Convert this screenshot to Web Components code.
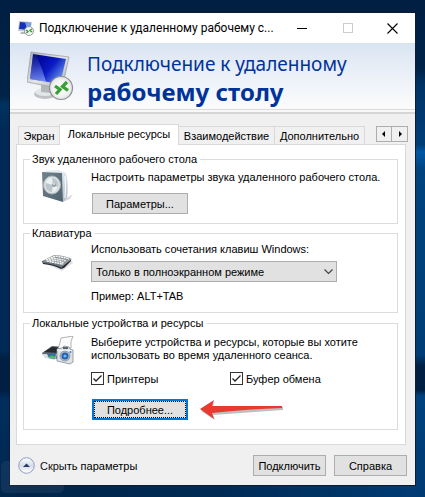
<!DOCTYPE html>
<html lang="ru">
<head>
<meta charset="utf-8">
<meta name="viewport" content="width=device-width, initial-scale=1">
<title>Подключение к удаленному рабочему столу</title>
<style>
    html{min-height: 100%; background: linear-gradient(180deg, #001f42 0px, #00234a 70px, #003366 85px, #003e78 145px, #0058a6 152px, #00437f 170px, #003d76 355px, #001f42 366px, #001f42 390px, #00427f 396px, #003c76 470px, #003a72 100%) right / 16px 100% no-repeat, linear-gradient(180deg, #001f42 0px, #002347 96px, #003260 104px, #002a55 130px, #002a55 350px, #001f42 360px, #001f42 390px, #002e5c 400px, #00264e 100%) left / 16px 100% no-repeat, linear-gradient(90deg, #002448 0%, #002a54 50%, #003c74 100%) bottom / 100% 50% no-repeat, #001f42;}
    body{margin: 0px; padding: 13px 10px 12px 10px; font-family: "Liberation Sans", Arial, sans-serif; font-size: 11px; line-height: 14px; color: #000000;}
    .gap{margin-top: 9px;}
    .checks{display: grid; grid-template-columns: 139px 1fr; margin-top: 10px;}
    .more{display: flex; align-items: center; gap: 12px; margin: 14px 0px 0px 1px;}
</style>
</head>
<body>

<rdp-window>
    <rdp-titlebar slot="title">Подключение к удаленному рабочему с...</rdp-titlebar>
    <rdp-banner slot="banner">
        <span slot="first">Подключение к удаленному</span>
        <span slot="second">рабочему столу</span>
    </rdp-banner>

    <rdp-tabs></rdp-tabs>

    <rdp-panel>
        <rdp-group label="Звук удаленного рабочего стола" style="--top: 4px">
            <rdp-icon name="speaker" slot="icon"></rdp-icon>
            <div>Настроить параметры звука удаленного рабочего стола.</div>
            <rdp-button style="margin: 9px 0px 0px 1px">Параметры...</rdp-button>
        </rdp-group>

        <rdp-group label="Клавиатура" style="--top: 2px; margin-top: 2px">
            <rdp-icon name="keyboard" slot="icon"></rdp-icon>
            <rdp-select label="Использовать сочетания клавиш Windows:" value="Только в полноэкранном режиме"></rdp-select>
            <div style="margin-top: 7px">Пример: ALT+TAB</div>
        </rdp-group>

        <rdp-group label="Локальные устройства и ресурсы" style="--top: 6px; margin-top: 3px">
            <rdp-icon name="printer" slot="icon"></rdp-icon>
            <div style="line-height: 13px">Выберите устройства и ресурсы, которые вы хотите использовать во время удаленного сеанса.</div>
            <div class="checks">
                <rdp-check>Принтеры</rdp-check>
                <rdp-check>Буфер обмена</rdp-check>
            </div>
            <div class="more">
                <rdp-button focused>Подробнее...</rdp-button>
                <rdp-icon name="arrow"></rdp-icon>
            </div>
        </rdp-group>
    </rdp-panel>

    <rdp-footer slot="footer"></rdp-footer>
</rdp-window>

<rdp-overlay></rdp-overlay>

<script>
// Shared helper: clone the markup into an open shadow root
function attach(el, html) {
    const shadowRoot = el.attachShadow({ mode: 'open' });
    const template = document.createElement('template');
    template.innerHTML = html;
    shadowRoot.appendChild(template.content.cloneNode(true));
    return shadowRoot;
}

const ICONS = {
    monitor: `
        <svg viewBox="0 0 48 50" width="48" height="50" aria-hidden="true">
            <defs>
                <linearGradient id="scr" x1="0" y1="0" x2="1" y2="0.7"><stop offset="0" stop-color="#0a1470"/><stop offset=".3" stop-color="#0208a0"/><stop offset=".6" stop-color="#0a1cc4"/><stop offset="1" stop-color="#6f9cf0"/></linearGradient>
                <linearGradient id="frm" x1="0" y1="0" x2="1" y2="1"><stop offset="0" stop-color="#a9adb0"/><stop offset=".5" stop-color="#e4e6e7"/><stop offset="1" stop-color="#a4a7aa"/></linearGradient>
                <linearGradient id="wdg" x1="0" y1="0" x2="0" y2="1"><stop offset="0" stop-color="#7d9ff0" stop-opacity="0"/><stop offset="1" stop-color="#a9c3ff" stop-opacity=".65"/></linearGradient>
                <radialGradient id="bdg" cx=".5" cy=".5" r=".5"><stop offset="0" stop-color="#ffffff"/><stop offset=".75" stop-color="#f0f0f0"/><stop offset="1" stop-color="#dedede"/></radialGradient>
            </defs>
            <ellipse cx="18" cy="43" rx="11" ry="5" fill="#bfc2c4"/>
            <ellipse cx="18" cy="41" rx="10" ry="4" fill="#e4e5e6"/>
            <path d="M14 34L25 36L24 42L14 41Z" fill="#b4b7ba"/>
            <path d="M4 1L42 6L35 38L0 31Z" fill="url(#frm)" stroke="#94999d" stroke-width=".7"/>
            <path d="M6 3L39 8L33 33L3 28Z" fill="url(#scr)"/>
            <path d="M6 3L9 4Q15 16 19 31L3 28Z" fill="url(#wdg)"/>
            <circle cx="34" cy="37" r="11.5" fill="url(#bdg)" stroke="#8d9092" stroke-width="1.2"/>
            <path d="M28 35L33 38.500L29 43M40 31L35.500 35.500L41 39.500" fill="none" stroke="#35a135" stroke-width="3.200"/>
        </svg>`,
    speaker: `
        <svg viewBox="0 0 32 32" width="32" height="32" aria-hidden="true">
            <defs><linearGradient id="sp" x1="0" y1="0" x2="1" y2="1"><stop offset="0" stop-color="#71838d"/><stop offset="1" stop-color="#4e626e"/></linearGradient>
            <linearGradient id="sd" x1="0" y1="0" x2="0" y2="1"><stop offset="0" stop-color="#e6edf2"/><stop offset="1" stop-color="#aebbc8"/></linearGradient></defs>
            <path d="M23 29L31 24L28 29L21 32Z" fill="#000" opacity=".15"/>
            <path d="M0 1L17 0L24 3Q27 14 25 28L21 32L20 4Z" fill="url(#sd)"/>
            <path d="M0 2L20 3L21 32L1 26Z" fill="url(#sp)"/>
            <ellipse cx="10" cy="15" rx="8.500" ry="9" fill="#dce2e6" stroke="#a5b0b7"/>
            <ellipse cx="10" cy="15" rx="6.500" ry="7" fill="#bcc6cb"/>
            <path d="M11 15L4 13Q5 8 10 8ZM11 15L16 17Q14 22 10 22Z" fill="#eef1f3"/>
            <circle cx="12" cy="15" r="2" fill="#8e9ca5"/>
            <circle cx="12" cy="14" r="1" fill="#e6ebee"/>
            <path d="M23 6Q24 16 23 28" stroke="#ffffff" fill="none"/>
        </svg>`,
    keyboard: `
        <svg viewBox="0 0 32 32" width="32" height="32" aria-hidden="true">
            <path d="M4 22L20 29L31 21L30 19Z" fill="#000" opacity=".12"/>
            <path d="M0 19L1 22Q12 23 19 27L22 26L29 19L29 17L20 23Z" fill="#252b33"/>
            <path d="M1 21Q12 22 20 26L21 23L1 19Z" fill="#69717b"/>
            <path d="M0 19L12 13Q21 13 30 17L21 24Q11 20 0 19Z" fill="#8f959b"/>
            <path d="M4 18L13 14Q21 15 27 17M5 19L15 21L21 22M9 16Q19 17 24 19M7 18Q16 18 22 21" fill="none" stroke="#f5f5f5" stroke-width="1.4" stroke-dasharray="2 .6"/>
        </svg>`,
    printer: `
        <svg viewBox="0 0 32 32" width="32" height="32" aria-hidden="true">
            <path d="M0 17L10 10L24 11L19 21L14 23L1 19Z" fill="#5d666d"/>
            <path d="M2 16L10 11L23 12L17 17Z" fill="#262b30"/>
            <path d="M0 18L15 18L13 24L3 22Z" fill="#d8dde0"/>
            <path d="M5 18L14 18L13 23L7 22Z" fill="#2876a8"/>
            <path d="M7 21Q10 18 13 21L13 23L7 22Z" fill="#5eb567"/>
            <path d="M19 2L31 0Q28 5 29 12L16 13Q18 7 19 2Z" fill="#fbfbfb" stroke="#9ba1a7" stroke-width=".8"/>
            <path d="M15 13L20 12L22 10L27 11L28 13L31 14V26L28 28L15 25Z" fill="#dfe3e6" stroke="#858d94" stroke-width=".8"/>
            <path d="M15 14L30 15" stroke="#ffffff"/>
            <rect x="21" y="11" width="5" height="2" fill="#59656f"/>
            <circle cx="23" cy="20" r="5" fill="#b4bec7" stroke="#7a858f" stroke-width=".7"/>
            <circle cx="23" cy="20" r="3.500" fill="#255fb4"/>
            <circle cx="23" cy="20" r="1.600" fill="#69bdf3"/>
            <circle cx="28.500" cy="16" r="1" fill="#3a7acb"/>
        </svg>`,
    arrow: `
        <svg viewBox="0 0 84 20" width="84" height="20" aria-hidden="true">
            <path d="M1 11L14 3L13 7L83 7V10L13 15L15 20Z" fill="#000" opacity=".25"/>
            <path d="M0 9L14 0L12 6Q45 6 82 6V8Q48 9 12 13L14 19Z" fill="#e53b30"/>
        </svg>`
};

class RdpIcon extends HTMLElement {
    constructor() {
        super();
        attach(this, `
            <style>
                :host{display: block;}
                svg{display: block;}
            </style>
            ${ICONS[this.getAttribute('name')]}
        `);
    }
}
customElements.define('rdp-icon', RdpIcon);

class RdpWindow extends HTMLElement {
    constructor() {
        super();
        attach(this, `
            <style>
                :host{display: block; background-color: #f0f0f0; box-shadow: 0px 0px 0px 1px #0b1c33;}
                main{padding: 10px 9px 0px 6px;}
                footer{padding: 10px 8px 9px 8px;}
            </style>
            <slot name="title"></slot>
            <slot name="banner"></slot>
            <main><slot></slot></main>
            <footer><slot name="footer"></slot></footer>
        `);
    }
}
customElements.define('rdp-window', RdpWindow);

class RdpTitlebar extends HTMLElement {
    constructor() {
        super();
        attach(this, `
            <style>
                :host{display: flex; align-items: center; height: 30px; padding-left: 8px; background-color: #ffffff; font-family: Roboto, "Noto Sans", sans-serif; font-size: 12px;}
                .logo{width: 16px; height: 16px; margin-right: 5px; flex: none;}
                .logo svg{display: block; width: 16px; height: 16px;}
                .text{flex: 1; min-width: 0px; white-space: nowrap; overflow: hidden;}
                button{width: 45px; height: 30px; flex: none; padding: 0px; border: none; background: none; display: flex; align-items: center; justify-content: center;}
            </style>
            <div class="logo">
                <svg viewBox="0 0 16 16" aria-hidden="true">
                    <path d="M3 12L8 12L9 14L2 14Z" fill="#b6babd"/>
                    <path d="M1 1L14 2L12 12L0 11Z" fill="#c6cacc"/>
                    <path d="M2 2L13 3L11 10L1 9Z" fill="#1430bd"/>
                    <path d="M7 2L13 3L11 10L9 9Z" fill="#7aa0ec"/>
                    <circle cx="11" cy="11" r="4.500" fill="#f4f4f4" stroke="#83888b" stroke-width=".8"/>
                    <path d="M8 10L10 11.500L8.500 13M14 9L12 10.500L14 12" fill="none" stroke="#2f9b35" stroke-width="1.400"/>
                </svg>
            </div>
            <div class="text"><slot></slot></div>
            <button aria-label="Свернуть"><svg width="11" height="11"><path d="M0 5.500H10" stroke="#000"/></svg></button>
            <button aria-label="Развернуть" disabled><svg width="10" height="10"><rect x=".5" y=".5" width="9" height="9" fill="none" stroke="#cccccc"/></svg></button>
            <button aria-label="Закрыть"><svg width="11" height="11"><path d="M.5 .5L10.500 10.500M10.500 .5L.5 10.500" stroke="#000" stroke-width="1.100"/></svg></button>
        `);
    }
}
customElements.define('rdp-titlebar', RdpTitlebar);

class RdpBanner extends HTMLElement {
    constructor() {
        super();
        attach(this, `
            <style>
                :host{display: flex; align-items: flex-start; box-sizing: border-box; height: 71px; padding: 8px 0px 0px 17px; border-bottom: 2px solid #d5d5d5; background: linear-gradient(180deg, #d9e4f2 0px, #e9eff7 28px, #f8f9fb 58px, #fbfbfb 66px, #dcdcdc 66px, #dcdcdc 67px, #f8f8f8 67px); font-family: "Noto Sans", "Open Sans", sans-serif; color: #003399;}
                svg{display: block; flex: none;}
                h1{margin: 0px 0px 0px 12px; font-weight: 400; font-size: 19px; line-height: 27px; white-space: nowrap;}
                .second{display: block; font-weight: 700; font-size: 24px;}
            </style>
            ${ICONS.monitor}
            <h1><slot name="first"></slot><span class="second"><slot name="second"></slot></span></h1>
        `);
    }
}
customElements.define('rdp-banner', RdpBanner);

class RdpTabs extends HTMLElement {
    constructor() {
        super();
        attach(this, `
            <style>
                :host{display: flex; align-items: flex-end; padding-left: 2px;}
                button{box-sizing: border-box; height: 18px; padding: 0px; border: 1px solid #d9d9d9; border-left-width: 0px; border-bottom: none; background-color: #f0f0f0; font: inherit; color: inherit; white-space: nowrap;}
                .tab{flex: none;}
                .tab.first{width: 41px; border-left-width: 1px; border-right-width: 0px;}
                .tab.on{width: 120px; height: 21px; margin-bottom: -1px; padding-bottom: 2px; border-left-width: 1px; background-color: #ffffff; z-index: 1;}
                .tab.wide{width: 96px;}
                .tab.last{width: 90px;}
                .scroll{display: flex; margin: 0px -2px 2px auto;}
                .scroll button{display: flex; align-items: center; justify-content: center; width: 16px; height: 16px; border: 1px solid #adadad; background-color: #f0f0f0;}
                .scroll button + button{border-left-width: 0px;}
            </style>
            <button class="tab first">Экран</button>
            <button class="tab on">Локальные ресурсы</button>
            <button class="tab wide">Взаимодействие</button>
            <button class="tab last">Дополнительно</button>
            <div class="scroll">
                <button aria-label="Назад"><svg width="6" height="6"><path d="M1 3L4 0V6Z"/></svg></button>
                <button aria-label="Вперед"><svg width="6" height="6"><path d="M5 3L2 0V6Z"/></svg></button>
            </div>
        `);
    }
}
customElements.define('rdp-tabs', RdpTabs);

class RdpPanel extends HTMLElement {
    constructor() {
        super();
        attach(this, `
            <style>
                :host{display: block; padding: 7px 7px 14px 6px; border: 1px solid #d9d9d9; background-color: #ffffff;}
            </style>
            <slot></slot>
        `);
    }
}
customElements.define('rdp-panel', RdpPanel);

class RdpGroup extends HTMLElement {
    constructor() {
        super();
        attach(this, `
            <style>
                :host{display: block;}
                fieldset{margin: 0px; padding: 0px 8px 9px 18px; border: 1px solid #dcdcdc; min-width: 0px;}
                legend{margin-left: -12px; padding: 0px 3px 0px 2px;}
                .row{display: grid; grid-template-columns: 32px minmax(0, 1fr); column-gap: 17px; padding-top: var(--top, 4px);}
            </style>
            <fieldset>
                <legend>${this.getAttribute('label')}</legend>
                <div class="row">
                    <slot name="icon"></slot>
                    <div><slot></slot></div>
                </div>
            </fieldset>
        `);
    }
}
customElements.define('rdp-group', RdpGroup);

class RdpButton extends HTMLElement {
    constructor() {
        super();
        attach(this, `
            <style>
                :host{display: block; width: 96px; flex: none;}
                button{display: block; box-sizing: border-box; width: 100%; height: 21px; padding: 0px; border: 1px solid #adadad; background-color: #e1e1e1; font: inherit; color: inherit; white-space: nowrap;}
                :host([focused]) button{border: 2px solid #0078d7; outline: 1px dotted #000000; outline-offset: -3px;}
            </style>
            <button><slot></slot></button>
        `);
    }
}
customElements.define('rdp-button', RdpButton);

class RdpSelect extends HTMLElement {
    constructor() {
        super();
        attach(this, `
            <style>
                :host{display: block;}
                label{display: block;}
                .box{display: grid; align-items: center; width: 246px; max-width: 100%; margin-top: 5px;}
                select, svg{grid-area: 1 / 1;}
                select{appearance: none; box-sizing: border-box; width: 100%; height: 21px; margin: 0px; padding: 0px 20px 0px 4px; border: 1px solid #adadad; border-radius: 0px; background-color: #e1e1e1; font: inherit; color: inherit;}
                svg{justify-self: end; margin-right: 4px; pointer-events: none;}
            </style>
            <label for="keys">${this.getAttribute('label')}</label>
            <div class="box">
                <select id="keys"><option>${this.getAttribute('value')}</option></select>
                <svg width="9" height="6"><path d="M.5 .5L4.500 4.500L8.500 .5" fill="none" stroke="#444444" stroke-width="1.200"/></svg>
            </div>
        `);
    }
}
customElements.define('rdp-select', RdpSelect);

class RdpCheck extends HTMLElement {
    constructor() {
        super();
        attach(this, `
            <style>
                :host{display: block;}
                label{display: flex; align-items: center; gap: 3px; height: 13px;}
                .box{display: grid; width: 13px; height: 13px;}
                input, svg{grid-area: 1 / 1;}
                input{appearance: none; box-sizing: border-box; width: 13px; height: 13px; margin: 0px; border: 1px solid #333333; background-color: #ffffff;}
                svg{pointer-events: none; visibility: hidden;}
                input:checked + svg{visibility: visible;}
            </style>
            <label>
                <span class="box"><input type="checkbox" checked><svg width="13" height="13"><path d="M2.500 6.500L5 9L10.500 3.500" fill="none" stroke="#222222" stroke-width="1.300"/></svg></span>
                <slot></slot>
            </label>
        `);
    }
}
customElements.define('rdp-check', RdpCheck);

class RdpFooter extends HTMLElement {
    constructor() {
        super();
        attach(this, `
            <style>
                :host{display: flex; align-items: center; gap: 8px;}
                .toggle{display: flex; align-items: center; gap: 5px; margin-right: auto; padding: 0px; border: none; background: none; font: inherit; color: inherit;}
                rdp-button{width: 73px;}
            </style>
            <button class="toggle">
                <svg width="17" height="17" viewBox="0 0 17 17" aria-hidden="true">
                    <defs><linearGradient id="g" x1="0" y1="0" x2="0" y2="1"><stop offset="0" stop-color="#ffffff"/><stop offset=".5" stop-color="#d3dbea"/><stop offset="1" stop-color="#ffffff"/></linearGradient></defs>
                    <circle cx="8.500" cy="8.500" r="7.800" fill="url(#g)" stroke="#8b99be"/>
                    <path d="M5 10L8.500 6.500L12 10Z" fill="#1b2f5e"/>
                </svg>
                Скрыть параметры
            </button>
            <rdp-button>Подключить</rdp-button>
            <rdp-button>Справка</rdp-button>
        `);
    }
}
customElements.define('rdp-footer', RdpFooter);

// Faint capture toolbar that floats over the bottom left corner
class RdpOverlay extends HTMLElement {
    constructor() {
        super();
        attach(this, `
            <style>
                :host{position: fixed; left: 1px; bottom: 4px; display: flex; align-items: center; justify-content: space-around; width: 63px; height: 32px; border-radius: 5px; background-color: rgba(255,255,255,0.06); pointer-events: none;}
            </style>
            <svg width="18" height="16" fill="none" stroke="#ffffff" stroke-opacity=".2"><path d="M1 5V2Q1 1 2 1H5M13 1H16Q17 1 17 2V5M1 11V14Q1 15 2 15H5"/><circle cx="9" cy="8" r="4"/><path d="M12 11L16 15"/></svg>
            <svg width="4" height="16" fill="#ffffff" fill-opacity=".25"><circle cx="2" cy="3" r="1"/><circle cx="2" cy="8" r="1"/><circle cx="2" cy="13" r="1"/></svg>
        `);
    }
}
customElements.define('rdp-overlay', RdpOverlay);
</script>
</body>
</html>
